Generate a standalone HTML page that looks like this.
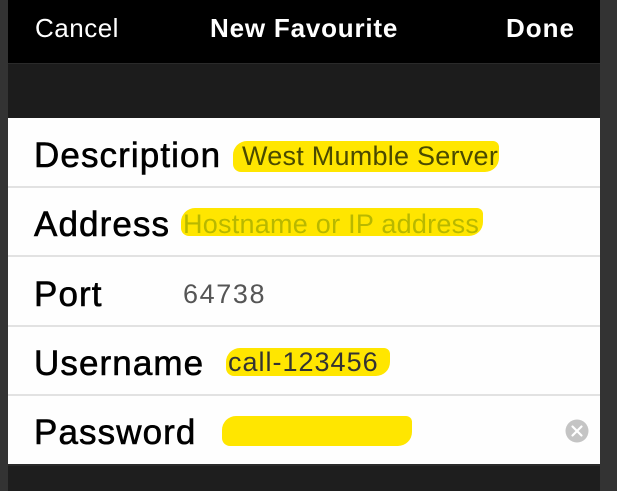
<!DOCTYPE html><html><head><style>
body{margin:0;width:617px;height:489px;background:#333;position:relative;overflow:hidden;font-family:"Liberation Sans",sans-serif}
.a{position:absolute}
.nav{left:8px;top:0;width:592px;height:63px;background:#000;border-bottom:1px solid #2a2a2a}
.nav div{position:absolute;top:13px;color:#fff;font-size:26px;letter-spacing:0.5px}
.gray{left:8px;top:64px;width:592px;height:54px;background:#1c1c1c}
.white{left:8px;top:118px;width:592px;height:346px;background:#fefefe}
.sep{left:8px;width:592px;height:2px;background:#e2e2e2}
.lab{left:34px;font-size:35px;color:#000;letter-spacing:1.1px;-webkit-text-stroke:0.6px #000}
.val{font-size:27px;letter-spacing:0.25px}
.hl{background:#ffe600;border-radius:14px 6px 14px 8px}
.bot{left:8px;top:464px;width:592px;height:25px;background:#1e1e1e;border-top:2px solid #2a2a2a}
</style></head><body>
<div class="a nav"><div style="left:27px">Cancel</div><div style="left:202px;font-weight:bold;letter-spacing:0.8px">New Favourite</div><div style="left:498px;font-weight:bold;letter-spacing:1px">Done</div></div>
<div class="a gray"></div>
<div class="a white"></div>
<div class="a sep" style="top:186px"></div>
<div class="a sep" style="top:255px"></div>
<div class="a sep" style="top:325px"></div>
<div class="a sep" style="top:394px"></div>
<div class="a bot"></div>
<div class="a hl" style="left:233px;top:141px;width:266px;height:31px"></div>
<div class="a hl" style="left:181px;top:208px;width:302px;height:28px"></div>
<div class="a hl" style="left:226px;top:348px;width:164px;height:28px"></div>
<div class="a hl" style="left:222px;top:416px;width:190px;height:30px"></div>
<div class="a lab" style="top:136px">Description</div>
<div class="a lab" style="top:205px">Address</div>
<div class="a lab" style="top:275px">Port</div>
<div class="a lab" style="top:344px">Username</div>
<div class="a lab" style="top:413px">Password</div>
<div class="a val" style="left:242px;top:141px;color:#4a4a00">West Mumble Server</div>
<div class="a val" style="left:183px;top:209px;color:#b8b800">Hostname or IP address</div>
<div class="a val" style="left:183px;top:279px;color:#555;letter-spacing:1.6px">64738</div>
<div class="a val" style="left:228px;top:347px;color:#333;letter-spacing:1px">call-123456</div>
<svg class="a" style="left:565px;top:419px" width="24" height="24"><circle cx="12" cy="12" r="11.5" fill="#c4c4c4"/><path d="M7.5 7.5L16.5 16.5M16.5 7.5L7.5 16.5" stroke="#fff" stroke-width="2.2" stroke-linecap="round"/></svg>
</body></html>
